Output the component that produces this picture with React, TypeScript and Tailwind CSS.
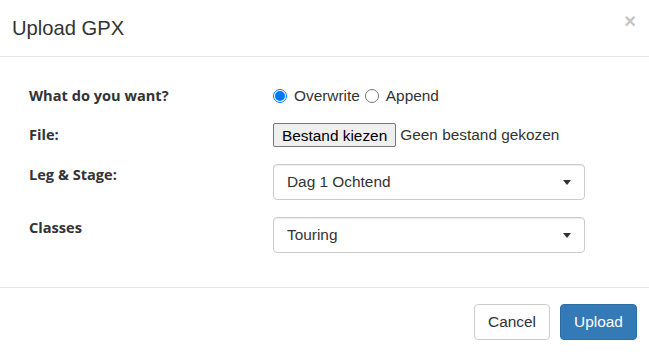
const labelCls =
  "w-[244px] shrink-0 text-[14.6px] font-bold text-[#333] [font-family:'Open_Sans',sans-serif]";

function Caret() {
  return (
    <span className="w-0 h-0 border-l-[4px] border-r-[4px] border-t-[5px] border-l-transparent border-r-transparent border-t-[#333]" />
  );
}

function Radio({ checked, label }: { checked: boolean; label: string }) {
  return (
    <label className="flex items-center gap-[7px]">
      <span
        className={
          checked
            ? "w-[14px] h-[14px] rounded-full border border-[#0075ff] flex items-center justify-center"
            : "w-[14px] h-[14px] rounded-full border border-[#767676]"
        }
      >
        {checked && <span className="w-[10px] h-[10px] rounded-full bg-[#0075ff]" />}
      </span>
      <span>{label}</span>
    </label>
  );
}

export default function App() {
  return (
    <div className="w-[649px] h-[352px] bg-white text-[#333] [font-family:'Liberation_Sans',Arial,sans-serif] overflow-hidden">
      <div className="h-[57px] border-b border-[#e5e5e5] flex items-center justify-between pl-[12px] pr-[13px]">
        <h4 className="text-[20.2px] leading-none text-[#333]">Upload GPX</h4>
        <span className="text-[20px] font-bold text-[#c4c4c4] leading-none -mt-[14px]">×</span>
      </div>

      <div className="h-[230px] pl-[29px] pt-[29px] text-[15.4px]">
        <div className="flex items-center h-[20px]">
          <div className={labelCls}>What do you want?</div>
          <div className="flex items-center gap-[5px]">
            <Radio checked label="Overwrite" />
            <Radio checked={false} label="Append" />
          </div>
        </div>

        <div className="flex items-center mt-[17px] h-[24px]">
          <div className={labelCls}>File:</div>
          <div className="flex items-center gap-[4px]">
            <button className="h-[24px] px-[8px] bg-[#efefef] border border-[#767676] rounded-[2px] text-[15.4px] text-black">
              Bestand kiezen
            </button>
            <span>Geen bestand gekozen</span>
          </div>
        </div>

        <div className="flex items-start mt-[17px]">
          <div className={labelCls}>Leg &amp; Stage:</div>
          <div className="w-[312px] h-[36px] border border-[#ccc] rounded-[4px] shadow-[inset_0_1px_1px_rgba(0,0,0,0.075)] flex items-center justify-between pl-[13px] pr-[13px]">
            <span>Dag 1 Ochtend</span>
            <Caret />
          </div>
        </div>

        <div className="flex items-start mt-[17px]">
          <div className={labelCls}>Classes</div>
          <div className="w-[312px] h-[36px] border border-[#ccc] rounded-[4px] shadow-[inset_0_1px_1px_rgba(0,0,0,0.075)] flex items-center justify-between pl-[13px] pr-[13px]">
            <span>Touring</span>
            <Caret />
          </div>
        </div>
      </div>

      <div className="border-t border-[#e5e5e5] flex justify-end gap-[10px] pt-[16px] pr-[12px]">
        <button className="w-[76px] h-[36px] bg-white border border-[#ccc] rounded-[4px] text-[15.4px] text-[#333]">
          Cancel
        </button>
        <button className="w-[77px] h-[36px] bg-[#337ab7] border border-[#2e6da4] rounded-[4px] text-[15.4px] text-white">
          Upload
        </button>
      </div>
    </div>
  );
}
